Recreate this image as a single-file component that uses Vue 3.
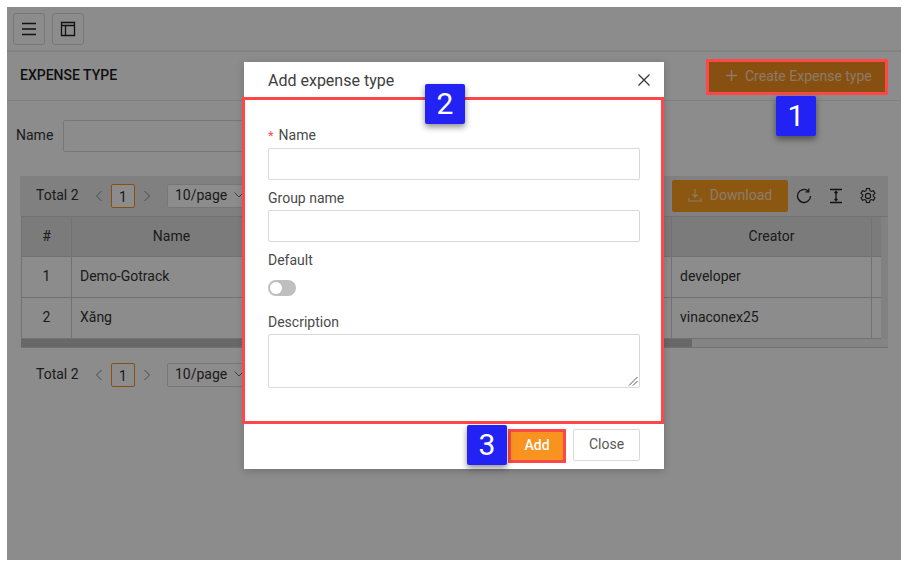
<script setup>
const rows = [
  { no: 1, name: 'Demo-Gotrack', creator: 'developer' },
  { no: 2, name: 'Xăng', creator: 'vinaconex25' }
]
</script>

<template>
  <div class="shot">
    <div class="app">
      <div class="topbar">
        <button class="tool">
          <svg width="16" height="14" viewBox="0 0 16 14" fill="none" stroke="#1f1f1f" stroke-width="1.3"><path d="M1 1.500h14M1 7h14M1 12.500h14"/></svg>
        </button>
        <button class="tool">
          <svg width="16" height="16" viewBox="0 0 16 16" fill="none" stroke="#1f1f1f" stroke-width="1.3"><path d="M1.500 1.500h13v13h-13zM1.500 4.500h13M5.500 4.500v10"/></svg>
        </button>
      </div>

      <div class="heading">
        <h1>EXPENSE TYPE</h1>
        <button class="create">
          <svg class="plus" width="11" height="11" viewBox="0 0 11 11" fill="none" stroke="currentColor" stroke-width="1.400"><path d="M5.500 0v11M0 5.500h11"/></svg>
          Create Expense type
        </button>
      </div>

      <div class="filter">
        <label>Name</label>
        <div class="filter-input"></div>
      </div>

      <div class="grid-wrap">
        <div class="toolbar">
          <div class="pager">
            <span class="total">Total 2</span>
            <svg class="chev" width="8" height="12" viewBox="0 0 8 12" fill="none" stroke="#8a8a8a" stroke-width="1"><path d="M6.500 1 1.500 6l5 5"/></svg>
            <span class="page">1</span>
            <svg class="chev" width="8" height="12" viewBox="0 0 8 12" fill="none" stroke="#8a8a8a" stroke-width="1"><path d="M1.500 1l5 5-5 5"/></svg>
            <span class="size">10/page<svg width="10" height="6" viewBox="0 0 10 6" fill="none" stroke="#777" stroke-width="1"><path d="M.5.5 5 5 9.500.5"/></svg></span>
          </div>
          <div class="actions">
            <button class="download">
              <svg width="14" height="14" viewBox="0 0 14 14" fill="none" stroke="currentColor" stroke-width="1.100"><path d="M7 1v8M4.500 6.500 7 9l2.500-2.500M1 10v3h12v-3"/></svg>
              Download
            </button>
            <svg class="act" width="18" height="18" viewBox="0 0 18 18" fill="none" stroke="#1f1f1f" stroke-width="1.300"><path d="M15.500 9A6.500 6.500 0 1 1 13.300 4.100"/><path d="M13.800 1.500v3.300h-3.300" stroke-width="1.200"/></svg>
            <svg class="act" width="18" height="18" viewBox="0 0 18 18" fill="none" stroke="#1f1f1f" stroke-width="1.300"><path d="M3 2.500h12M3 15.500h12M9 4.500v9M7.500 6 9 4.500 10.500 6M7.500 12 9 13.500 10.500 12"/></svg>
            <svg class="act" width="18" height="18" viewBox="0 0 18 18" fill="none" stroke="#1f1f1f" stroke-width="1.100"><path d="M7.500 1.500h3l.4 2.200 1.500.8 2.100-.8 1.500 2.600-1.700 1.400v1.600l1.700 1.400-1.500 2.600-2.100-.8-1.500.8-.4 2.200h-3l-.4-2.200-1.500-.8-2.100.8-1.500-2.600 1.700-1.400V7.700L2 6.300l1.500-2.600 2.100.8 1.500-.8z"/><circle cx="9" cy="9" r="2.600"/></svg>
          </div>
        </div>

        <table>
          <colgroup>
            <col class="w50" /><col class="w200" /><col class="w200" /><col class="w200" /><col class="w200" /><col class="w9" /><col />
          </colgroup>
          <thead>
            <tr><th>#</th><th>Name</th><th></th><th></th><th>Creator</th><th class="gap"></th><th class="track"></th></tr>
          </thead>
          <tbody>
            <tr v-for="r in rows" :key="r.no">
              <td class="c">{{ r.no }}</td><td>{{ r.name }}</td><td></td><td></td><td>{{ r.creator }}</td><td class="gap"></td><td class="track"></td>
            </tr>
          </tbody>
        </table>
        <div class="hscroll"><div class="thumb"></div></div>

        <div class="pager bottom">
          <span class="total">Total 2</span>
          <svg class="chev" width="8" height="12" viewBox="0 0 8 12" fill="none" stroke="#8a8a8a" stroke-width="1"><path d="M6.500 1 1.500 6l5 5"/></svg>
          <span class="page">1</span>
          <svg class="chev" width="8" height="12" viewBox="0 0 8 12" fill="none" stroke="#8a8a8a" stroke-width="1"><path d="M1.500 1l5 5-5 5"/></svg>
          <span class="size">10/page<svg width="10" height="6" viewBox="0 0 10 6" fill="none" stroke="#777" stroke-width="1"><path d="M.5.5 5 5 9.500.5"/></svg></span>
        </div>
      </div>

      <div class="mask">
        <div class="modal">
          <div class="modal-head">
            <span>Add expense type</span>
            <svg width="12" height="12" viewBox="0 0 12 12" fill="none" stroke="#333" stroke-width="1.200"><path d="M.5.5l11 11M11.500.5l-11 11"/></svg>
          </div>
          <div class="modal-body">
            <label class="lbl first"><span class="req">*</span>Name</label>
            <div class="inp"></div>
            <label class="lbl">Group name</label>
            <div class="inp"></div>
            <label class="lbl">Default</label>
            <div class="switch"><i></i></div>
            <label class="lbl desc">Description</label>
            <div class="area">
              <svg width="10" height="10" viewBox="0 0 10 10" fill="none" stroke="#555" stroke-width="1"><path d="M1 9.500 9.500 1M5 9.500 9.500 5"/></svg>
            </div>
          </div>
          <div class="modal-foot">
            <button class="add">Add</button>
            <button class="close">Close</button>
          </div>
        </div>
      </div>

      <div class="hilite h1"></div>
      <div class="badge b1">1</div>
      <div class="badge b2">2</div>
      <div class="badge b3">3</div>
    </div>
  </div>
</template>

<style scoped>
.shot {
  width: 909px;
  height: 568px;
  padding: 7px 8px 8px 7px;
  box-sizing: border-box;
  background: #fff;
  font-family: Roboto, "Liberation Sans", sans-serif;
  font-size: 14px;
  color: #333;
}
.app {
  position: relative;
  height: 100%;
  background: #fff;
  overflow: hidden;
}
button { font-family: inherit; cursor: pointer; }
.topbar {
  display: flex;
  gap: 7px;
  height: 45px;
  box-sizing: border-box;
  padding: 6px;
  border-bottom: 2px solid #ededed;
}
.tool {
  width: 32px;
  height: 32px;
  padding: 0;
  display: flex;
  align-items: center;
  justify-content: center;
  background: #fff;
  border: 1px solid #d9d9d9;
  border-radius: 3px;
}
.heading {
  display: flex;
  align-items: center;
  justify-content: space-between;
  height: 49px;
  box-sizing: border-box;
  padding: 0 14px 0 13px;
  border-bottom: 1px solid #ececec;
}
.heading h1 {
  margin: 0 0 2px;
  font-size: 14px;
  font-weight: 500;
  color: #1d1d1d;
}
.create {
  display: flex;
  align-items: center;
  width: 178px;
  height: 34px;
  padding: 0 0 1px 17px;
  border: none;
  background: #f7931e;
  font-size: 14px;
}
.create, .download { color: rgba(255, 255, 255, 0.72); }
.plus { margin-right: 8px; }
.filter {
  display: flex;
  align-items: center;
  gap: 10px;
  padding: 19px 0 0 9px;
  height: 32px;
}
.filter label { color: #333; padding-bottom: 2px; }
.filter-input {
  width: 300px;
  height: 32px;
  box-sizing: border-box;
  border: 1px solid #d9d9d9;
  border-radius: 2px;
}
.grid-wrap {
  margin: 24px 13px 0 13px;
}
.toolbar {
  display: flex;
  align-items: center;
  justify-content: space-between;
  height: 40px;
  background: #eaeaea;
}
.pager {
  display: flex;
  align-items: center;
  padding-left: 16px;
}
.total { width: 59px; padding-bottom: 2px; color: #333; }
.chev { flex: none; }
.page {
  width: 24px;
  height: 24px;
  margin: 0 8px;
  box-sizing: border-box;
  border: 1px solid #f7931e;
  border-radius: 2px;
  text-align: center;
  line-height: 24px;
  background: #fff;
}
.size {
  display: flex;
  align-items: center;
  gap: 7px;
  width: 110px;
  height: 24px;
  margin-left: 16px;
  padding: 0 0 2px 7px;
  box-sizing: border-box;
  border: 1px solid #d9d9d9;
  border-radius: 2px;
  background: #fff;
}
.pager.bottom { height: 24px; margin-top: 15px; }
.actions {
  display: flex;
  align-items: center;
  gap: 14px;
  padding-right: 11px;
}
.download {
  display: flex;
  align-items: center;
  justify-content: center;
  gap: 8px;
  width: 116px;
  height: 32px;
  margin-right: -7px;
  padding: 0 0 2px;
  border: none;
  border-radius: 2px;
  background: #ffa020;
  font-size: 14px;
}
table {
  width: 867px;
  margin-left: 1px;
  table-layout: fixed;
  border-collapse: collapse;
  color: #333;
}
.w50 { width: 50px; }
.w200 { width: 200px; }
.w9 { width: 9px; }
th, td {
  box-sizing: border-box;
  border: 1px solid #cfcfcf;
  padding: 0 8px 2px;
  font-weight: 400;
  text-align: left;
}
th { height: 40px; background: #e0e0e0; text-align: center; }
td { height: 41px; background: #fff; }
td.c { text-align: center; }
.gap { border-right: none; }
.track {
  border-left: none;
  border-right: none;
  border-bottom: none;
  background: #ececec;
}
td.track { border-top: none; }
.hscroll {
  height: 9px;
  margin-left: 1px;
  background: #f0f0f0;
  border-bottom: 1px solid #cfcfcf;
  box-sizing: border-box;
}
.thumb { width: 671px; height: 8px; background: #bdbdbd; }

.mask {
  position: absolute;
  inset: 0;
  display: flex;
  justify-content: center;
  align-items: flex-start;
  background: rgba(0, 0, 0, 0.45);
}
.modal {
  width: 420px;
  margin-top: 55px;
  background: #fff;
  box-shadow: 0 2px 8px rgba(0, 0, 0, 0.2);
}
.modal-head {
  display: flex;
  align-items: center;
  justify-content: space-between;
  height: 35px;
  padding: 1px 14px 0 24px;
  box-sizing: border-box;
  font-size: 16px;
  color: #404040;
}
.modal-body {
  display: flex;
  flex-direction: column;
  height: 327px;
  width: 422px;
  box-sizing: border-box;
  padding: 26px 21px 0 23px;
  margin-left: -2px;
  border: 3px solid #ff4747;
}
.lbl {
  height: 22px;
  line-height: 20px;
  color: #4a4a4a;
  margin-top: 8px;
}
.lbl.first { margin-top: -1px; margin-bottom: 1px; }
.lbl.desc { margin-top: 16px; }
.req { color: #ff4d4f; margin-right: 5px; font-size: 13px; }
.inp {
  height: 32px;
  box-sizing: border-box;
  border: 1px solid #d9d9d9;
  border-radius: 2px;
  flex: none;
}
.switch {
  position: relative;
  width: 28px;
  height: 16px;
  margin-top: 8px;
  flex: none;
  border-radius: 8px;
  background: #bfbfbf;
}
.switch i {
  position: absolute;
  left: 2px;
  top: 2px;
  width: 12px;
  height: 12px;
  border-radius: 50%;
  background: #fff;
}
.area {
  position: relative;
  height: 54px;
  box-sizing: border-box;
  border: 1px solid #d9d9d9;
  border-radius: 2px;
  flex: none;
}
.area svg { position: absolute; right: 1px; bottom: 1px; }
.modal-foot {
  display: flex;
  justify-content: flex-end;
  align-items: flex-start;
  gap: 7px;
  height: 45px;
  box-sizing: border-box;
  padding: 5px 24px 0 0;
}
.add {
  width: 58px;
  height: 34px;
  border: 3px solid #ff4747;
  background: #f7931e;
  color: #fff;
  font-size: 14px;
  font-weight: 500;
  padding: 0 0 2px;
}
.close {
  width: 67px;
  height: 32px;
  border: 1px solid #d9d9d9;
  border-radius: 2px;
  background: #fff;
  color: #595959;
  font-size: 14px;
  padding: 0 0 2px;
}
.hilite {
  position: absolute;
  box-sizing: border-box;
  border: 3px solid #ff4747;
}
.h1 { left: 699px; top: 52px; width: 182px; height: 36px; }
.badge {
  position: absolute;
  width: 40px;
  height: 40px;
  border-radius: 2px;
  background: #2222f5;
  color: #fff;
  font-size: 30px;
  line-height: 40px;
  text-align: center;
  box-shadow: 0 3px 6px rgba(0, 0, 0, 0.45);
}
.b1 { left: 769px; top: 89px; }
.b2 { left: 418px; top: 77px; }
.b3 { left: 460px; top: 418px; }
</style>

<style>
html, body { margin: 0; padding: 0; background: #fff; }
</style>
